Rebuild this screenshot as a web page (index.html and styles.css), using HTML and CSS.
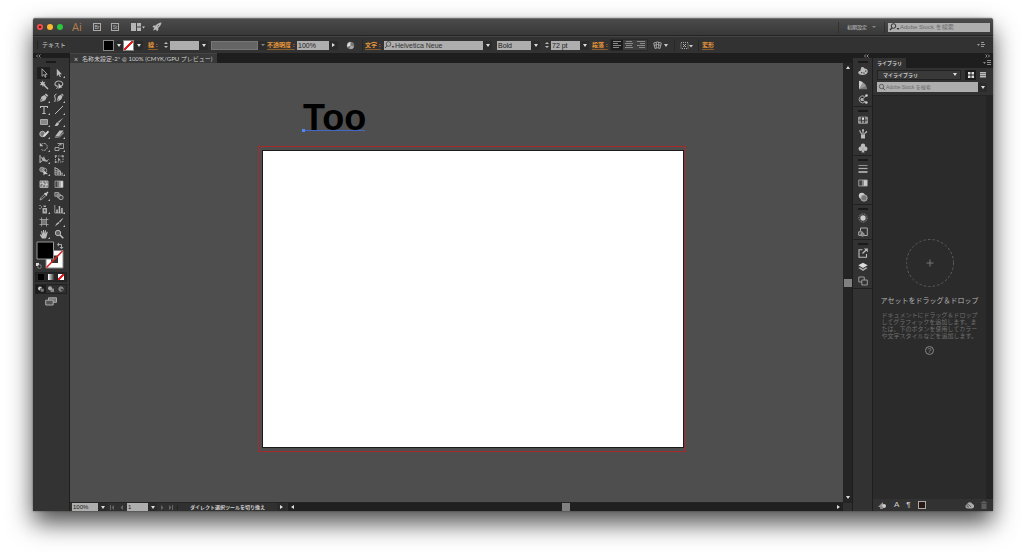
FILE: index.html
```html
<!DOCTYPE html>
<html lang="ja">
<head>
<meta charset="utf-8">
<title>名称未設定-2</title>
<link rel="stylesheet" href="styles.css">
</head>
<body>
<div class="window">
  <header class="titlebar">
    <div class="lights">
      <button class="light red" aria-label="閉じる"></button>
      <button class="light yellow" aria-label="最小化"></button>
      <button class="light green" aria-label="拡大"></button>
    </div>
    <span class="brand">Ai</span>
    <button class="app-box">Br</button>
    <button class="app-box">St</button>
    <button class="arrange" aria-label="ドキュメントレイアウト"><svg width="14" height="8" viewBox="0 0 14 8"><path d="M0 0h5v8H0zM6 0h4v3.5H6zM6 4.500h4V8H6z" fill="#b5b5b5"/><path d="M11 3.500h3l-1.500 2z" fill="#ccc"/></svg></button>
    <button class="rocket" aria-label="GPU パフォーマンス"><svg width="10" height="10" viewBox="0 0 10 10"><path d="M9.500.5C7 .6 5 1.800 3.800 3.400L1.500 3.600.3 5.300l2.100.1L1 8.500l3.200-1.100.7 2 1.400-1.300-.1-2.200C8 4.500 9.300 2.600 9.500.5z" fill="#b8b8b8"/><path d="M5.500 4.500l1.500-1.500" stroke="#555" stroke-width=".8"/></svg></button>
    <span class="spacer"></span>
    <button class="workspace">初期設定<i class="caret dim"></i></button>
    <label class="search stock"><svg width="11" height="8" viewBox="0 0 11 8"><circle cx="4.500" cy="3" r="2.300" fill="none" stroke="#333"/><path d="M3 4.800L1 7" stroke="#333" stroke-width="1.200"/><path d="M7.500 5h3L9 7z" fill="#333"/></svg><input type="text" placeholder="Adobe Stock を検索" aria-label="Adobe Stock を検索"></label>
  </header>

  <div class="control">
    <span class="object-kind">テキスト</span>
    <button class="swatch black" aria-label="塗り"></button><button class="drop" aria-label="塗りを選択"><i class="caret"></i></button>
    <button class="swatch none" aria-label="線なし"></button><button class="drop stroke-drop" aria-label="線を選択"><i class="caret"></i></button>
    <label class="link stroke-label" for="stroke">線 :</label>
    <span class="spin"><i></i><i></i></span>
    <input class="field w30" id="stroke" type="text"><button class="drop" aria-label="線幅を選択"><i class="caret"></i></button>
    <button class="profile" aria-label="線幅プロファイル"></button><button class="drop" aria-label="プロファイルを選択"><i class="caret dim"></i></button>
    <label class="link opacity-label" for="opacity">不透明度 :</label>
    <input class="field w32" id="opacity" type="text" value="100%"><button class="drop" aria-label="不透明度を選択"><i class="caret right"></i></button>
    <button class="tint" aria-label="オブジェクトを再配色"><svg width="9" height="9" viewBox="0 0 9 9"><circle cx="4.500" cy="4.500" r="3.700" fill="#777"/><path d="M4.500 1a3.500 3.500 0 0 0-3 5l3-1.500z" fill="#ddd"/><path d="M4.500 4.500L8 5.500A3.500 3.500 0 0 1 4 8z" fill="#aaa"/></svg></button>
    <label class="link font-label" for="font">文字 :</label>
    <span class="search font"><svg width="11" height="8" viewBox="0 0 11 8"><circle cx="4.500" cy="3" r="2.300" fill="none" stroke="#444" stroke-width=".8"/><path d="M3 4.800L1 7" stroke="#444"/><path d="M7.500 5h3L9 7z" fill="#444"/></svg><input id="font" type="text" value="Helvetica Neue"></span><button class="drop" aria-label="フォントを選択"><i class="caret"></i></button>
    <input class="field w34 weight" type="text" value="Bold" aria-label="スタイル"><button class="drop" aria-label="スタイルを選択"><i class="caret"></i></button>
    <span class="spin size-spin"><i></i><i></i></span>
    <input class="field w30" type="text" value="72 pt" aria-label="フォントサイズ"><button class="drop" aria-label="サイズを選択"><i class="caret"></i></button>
    <span class="link para-label">段落 :</span>
    <div class="align">
      <button class="on" aria-label="左揃え"><svg width="8" height="8" viewBox="0 0 8 8"><path d="M0 .5h8M0 2.500h5M0 4.500h8M0 6.500h6"/></svg></button>
      <button aria-label="中央揃え"><svg width="8" height="8" viewBox="0 0 8 8"><path d="M1 .5h6M0 2.500h8M1 4.500h6M0 6.500h8"/></svg></button>
      <button aria-label="右揃え"><svg width="8" height="8" viewBox="0 0 8 8"><path d="M0 .5h8M3 2.500h5M0 4.500h8M2 6.500h6"/></svg></button>
    </div>
    <button class="warp" aria-label="エンベロープ"><svg width="16" height="9" viewBox="0 0 16 9"><path d="M.7 2Q4.500-.2 8.300 2L7 7.500Q4.500 6 2 7.500zM.9 4.500Q4.500 2.500 8 4.500M3.300 1.200V6.800M5.700 1.200V6.800" fill="none" stroke="#aaa" stroke-width=".9"/><path d="M11 3h4l-2 3z" fill="#ccc"/></svg></button>
    <button class="similar" aria-label="類似オブジェクト"><svg width="13" height="9" viewBox="0 0 13 9"><path d="M1 1.500h7v6H1z" fill="none" stroke="#aaa" stroke-dasharray="1 1"/><path d="M3 3h1v1H3zM5 3h1v1H5zM4 4h1v1H4zM3 5h1v1H3zM5 5h1v1H5z" fill="#aaa"/><path d="M9 4h4l-2 2.500z" fill="#ccc"/></svg></button>
    <button class="link transform">変形</button>
    <span class="spacer"></span>
    <button class="menu" aria-label="メニュー"><svg width="8" height="6" viewBox="0 0 8 6"><path d="M0 2h3L1.500 4zM4 0h3v1H4zM4 2h4v1H4zM4 4h3v1H4z" fill="#999"/></svg></button>
  </div>

  <main class="work">
    <aside class="tools">
      <div class="strip"><svg width="5" height="4" viewBox="0 0 5 4"><path d="M2 .5L.5 2 2 3.500M4.500.5L3 2l1.500 1.500" fill="none" stroke="#aaa" stroke-width=".8"/></svg></div>
      <i class="grip wide"></i>
      <div class="tool-grid">
        <button class="on" aria-label="選択"><svg viewBox="0 0 10 10"><path d="M3 .8v7.500l1.900-1.700 1.200 2.700 1-.5-1.200-2.500h2.300z" fill="#222" stroke="#bbb" stroke-width=".8"/></svg></button>
        <button class="more" aria-label="ダイレクト選択"><svg viewBox="0 0 10 10"><path d="M2.800.8v7.500l1.900-1.700 1.200 2.700 1-.5-1.200-2.500h2.300z" fill="#bbb"/></svg></button>
        <button aria-label="自動選択"><svg viewBox="0 0 10 10"><path d="M4.500 4.500L9 9" stroke="#bbb" stroke-width="1.500"/><path d="M3.500.3l.7 2 2.200-.6-1.200 1.900 1.600 1.200-2.200.2L4 7.300 3.100 5 .7 5.300 2.100 3.500.8 1.700l2 .5z" fill="#bbb"/></svg></button>
        <button aria-label="なげなわ"><svg viewBox="0 0 10 10"><path d="M3 6.200C-.7 5 1 .9 5 1s5 4 2 5" fill="none" stroke="#aaa" stroke-width="1.200"/><path d="M3 5.500Q4.500 7 2.500 9" fill="none" stroke="#aaa"/><path d="M4.500 3v6l1.400-1.300 2.400-.2z" fill="#ccc"/></svg></button>
        <i class="rule"></i>
        <button class="more" aria-label="ペン"><svg viewBox="0 0 10 10"><path d="M7 .5l2.300 2.300-1.200 1L5.800 1.600zM5.500 2l2.300 2.300-1.600 3L1 9.200l2.500-3-.4-.5L.7 8.700 2.600 3.500z" fill="#bbb"/></svg></button>
        <button class="more" aria-label="曲線"><svg viewBox="0 0 10 10"><path d="M8 .5l1.700 1.700-.8.8-1.800-1.700zM6.800 1.800l1.700 1.800-1.300 2.900L3 9l2-2.700-.4-.4L2.600 8.500 4 3.300z" fill="#bbb"/><path d="M.7 9Q2 6 .8 4T2.500 1" fill="none" stroke="#bbb"/></svg></button>
        <button class="more" aria-label="文字"><svg viewBox="0 0 10 10"><path d="M1.500 3V1.500h7V3M5 1.500v7M3.300 8.500h3.400" fill="none" stroke="#bbb" stroke-width="1.100"/></svg></button>
        <button class="more" aria-label="直線"><svg viewBox="0 0 10 10"><path d="M1 9L9 1" stroke="#bbb"/></svg></button>
        <button class="more" aria-label="長方形"><svg viewBox="0 0 10 10"><path d="M1.500 2.500h7v5h-7z" fill="#888" stroke="#bbb" stroke-width=".8"/></svg></button>
        <button class="more" aria-label="ブラシ"><svg viewBox="0 0 10 10"><path d="M9.500.5L5 6 3.800 5z" fill="#bbb"/><path d="M3.500 5.300L5 6.700C4.500 9 2 9.500.5 8.700 2 8 1.800 5.500 3.500 5.300z" fill="#bbb"/></svg></button>
        <button class="more" aria-label="Shaper"><svg viewBox="0 0 10 10"><circle cx="3.500" cy="5" r="2.700" fill="#777" stroke="#bbb"/><path d="M9 1.500L4.500 6 4 8l2-.6L10 3z" fill="#ddd"/></svg></button>
        <button class="more" aria-label="消しゴム"><svg viewBox="0 0 10 10"><path d="M5.500 1.500h4L5 7.500H1z" fill="#bbb"/><path d="M1 7.500h4L4.500 9H.7z" fill="#777"/><path d="M5.500 7.500l4-5v2L5 9z" fill="#999"/></svg></button>
        <i class="rule"></i>
        <button class="more" aria-label="回転"><svg viewBox="0 0 10 10"><path d="M2.500 2.200A3.500 3.500 0 1 1 2 7" fill="none" stroke="#aaa" stroke-dasharray="2 .7"/><path d="M.8.8v3.500h3.500z" fill="#bbb"/></svg></button>
        <button class="more" aria-label="拡大・縮小"><svg viewBox="0 0 10 10"><path d="M1 5.500h4v3H1zM3.500 1.500h6v5H6M4 4l3-2M5.500 2H7v1.500" fill="none" stroke="#aaa" stroke-width=".9"/></svg></button>
        <button class="more" aria-label="線幅"><svg viewBox="0 0 10 10"><path d="M1 1v8M1 8C4 8 3 4 5 5s2 3 4.500.5" fill="none" stroke="#bbb"/><path d="M1 2l3 2 1-2 1 3 3 3-5-1z" fill="#aaa"/></svg></button>
        <button aria-label="自由変形"><svg viewBox="0 0 10 10"><path d="M1.500 2h7.500v6H1.500z" fill="none" stroke="#aaa" stroke-width=".9" stroke-dasharray="1.500 1"/><path d="M.8 1.200h1.700v1.700H.8zM.8 7.200h1.700v1.700H.8zM8 1.200h1.700v1.700H8zM4 3.500v4l1-1 2-.3z" fill="#aaa"/></svg></button>
        <button class="more" aria-label="シェイプ形成"><svg viewBox="0 0 10 10"><circle cx="3" cy="3.500" r="2.300" fill="#777" stroke="#aaa" stroke-width=".8"/><circle cx="5.500" cy="4.500" r="2.300" fill="none" stroke="#aaa" stroke-width=".8"/><path d="M4.500 4v5.500L6 8l3 .2z" fill="#ccc"/></svg></button>
        <button class="more" aria-label="遠近グリッド"><svg viewBox="0 0 10 10"><path d="M1 1v8h8M1 2l3 1v6M4 3.500L6.500 5v4M1 4.500l6 1.500M1 6.800l8 .5" fill="none" stroke="#aaa"/></svg></button>
        <i class="rule"></i>
        <button aria-label="メッシュ"><svg viewBox="0 0 10 10"><path d="M1 2h8v6.500H1z" fill="#777" stroke="#aaa"/><path d="M1 5q2-2 4 0t4 0M3 2q3 3 0 6M6.500 2q2 3 0 6" fill="none" stroke="#ddd" stroke-width=".8"/></svg></button>
        <button aria-label="グラデーション"><svg viewBox="0 0 10 10"><path d="M1 2h2v6.500H1z" fill="#444"/><path d="M3 2h2v6.500H3z" fill="#777"/><path d="M5 2h2v6.500H5z" fill="#aaa"/><path d="M7 2h2v6.500H7z" fill="#ddd"/><path d="M1 2h8v6.500H1z" fill="none" stroke="#aaa" stroke-width=".7"/></svg></button>
        <button class="more" aria-label="スポイト"><svg viewBox="0 0 10 10"><path d="M1 9l1-2.300L5.500 3.200l1.300 1.300L3.300 8z" fill="none" stroke="#aaa" stroke-width=".9"/><path d="M5 2.500l1-.8 1 .3L8.500.5l1 1L8 3l.3 1-.8 1z" fill="#ccc"/></svg></button>
        <button aria-label="ブレンド"><svg viewBox="0 0 10 10"><path d="M.8 1.500h4v3.800h-4z" fill="#666" stroke="#aaa" stroke-width=".8"/><circle cx="5" cy="5" r="2" fill="#777" stroke="#aaa" stroke-width=".8"/><circle cx="7" cy="6.500" r="2.200" fill="#444" stroke="#bbb" stroke-width=".8"/></svg></button>
        <i class="rule"></i>
        <button class="more" aria-label="シンボルスプレー"><svg viewBox="0 0 10 10"><path d="M3.500 4h4.500v5.500H3.500zM4.500 1.500h2.500V3H4.500z" fill="#aaa"/><path d="M.5 1h1v1h-1zM2 2.500h1v1H2zM.5 4h1v1h-1z" fill="#ccc"/><path d="M5 5.500h1.500v2H5z" fill="#444"/></svg></button>
        <button class="more" aria-label="棒グラフ"><svg viewBox="0 0 10 10"><path d="M.8 1v8h8.700" fill="none" stroke="#aaa" stroke-width=".8"/><path d="M2.300 5.500h1.500V9H2.300zM4.700 2h1.500v7H4.700zM7.200 4h1.500v5H7.200z" fill="#bbb"/></svg></button>
        <i class="rule"></i>
        <button aria-label="アートボード"><svg viewBox="0 0 10 10"><path d="M2.500.5v9M7.500.5v9M.5 2.500h9M.5 7.500h9" stroke="#aaa" stroke-width=".8"/><path d="M3 3h4v4H3z" fill="#777"/></svg></button>
        <button class="more" aria-label="スライス"><svg viewBox="0 0 10 10"><path d="M9.500 1L6 5.500 5 4.500 7.500 2zM4.500 5l1 1L1 9.500 2.500 6.500z" fill="#bbb"/></svg></button>
        <button class="more" aria-label="手のひら"><svg viewBox="0 0 10 10"><path d="M3 9.500L.7 5.800l1-.5L3 6.500 2 2.200l1-.3 1 3V1h1v3.700L6 1.200l1 .2-.4 3.700 1.200-2.500.9.300-1.200 5L6.500 9.500z" fill="#bbb"/></svg></button>
        <button aria-label="ズーム"><svg viewBox="0 0 10 10"><circle cx="4" cy="4" r="2.700" fill="#666" stroke="#bbb"/><path d="M6 6l3.300 3.300" stroke="#bbb" stroke-width="1.600"/></svg></button>
      </div>
      <svg class="fillstroke" width="30" height="29" viewBox="0 0 30 29">
        <path d="M10 9.500h17V27H10z" fill="#fff" stroke="#888"/><path d="M15 14.500h7v7.500h-7z" fill="#333"/><path d="M10.500 26.500L26.500 10" stroke="#e02020" stroke-width="1.500"/>
        <path d="M1 1h16.500v17H1z" fill="#000" stroke="#999"/>
        <path d="M22.500 3.500h3v3" fill="none" stroke="#aaa"/><path d="M23 1.500v4l-2-2zM23.500 6h4l-2 2.200z" fill="#aaa"/>
        <path d="M0 22h3v3H0z" fill="#ddd"/><path d="M2 24h3v3H2z" fill="#111" stroke="#aaa" stroke-width=".7"/>
      </svg>
      <div class="triple">
        <button aria-label="カラー"><i class="chip solid"></i></button><button aria-label="グラデーション塗り"><i class="chip grad"></i></button><button aria-label="なし"><i class="chip empty"></i></button>
      </div>
      <div class="triple modes">
        <button class="on" aria-label="標準描画"><svg viewBox="0 0 8 8"><circle cx="3" cy="3.500" r="2" fill="#ccc"/><path d="M3.500 3.500H7V7H3.500z" fill="#777" stroke="#222" stroke-width=".5"/></svg></button>
        <button aria-label="背面描画"><svg viewBox="0 0 8 8"><path d="M3.500 3.500H7V7H3.500z" fill="#888"/><circle cx="3" cy="3.200" r="2" fill="#aaa"/></svg></button>
        <button aria-label="内側描画"><svg viewBox="0 0 8 8"><circle cx="4" cy="4" r="2.200" fill="#777" stroke="#999" stroke-width=".8"/><path d="M4 4h2v1.500H4z" fill="#333"/></svg></button>
      </div>
      <button class="screen" aria-label="スクリーンモード"><svg width="12" height="9" viewBox="0 0 12 9"><path d="M3.500.8h8v4.500h-8z" fill="#777" stroke="#aaa"/><path d="M.7 3.200h7.500V8H.7z" fill="#555" stroke="#aaa"/></svg></button>
    </aside>

    <section class="document">
      <div class="tabs"><div class="tab"><button class="close" aria-label="タブを閉じる">×</button>名称未設定-2* @ 100% (CMYK/GPU プレビュー)</div></div>
      <div class="view">
        <div class="canvas">
          <div class="bleed"></div>
          <div class="artboard"></div>
          <div class="type">Too</div>
        </div>
        <div class="vscroll"><i class="tri up"></i><i class="thumb"></i><i class="tri down"></i></div>
      </div>
      <footer class="status">
        <input class="field zoom" type="text" value="100%" aria-label="ズーム率"><button class="drop" aria-label="ズーム率を選択"><i class="caret"></i></button>
        <button class="nav" aria-label="前へ"><svg width="14" height="5" viewBox="0 0 14 5"><path d="M0 0h1v5H0zM4 0v5L1.500 2.500zM13 0v5l-2.500-2.500z" fill="#666"/></svg></button>
        <input class="field page" type="text" value="1" aria-label="アートボード番号"><button class="drop" aria-label="アートボードを選択"><i class="caret"></i></button>
        <button class="nav next" aria-label="次へ"><svg width="14" height="5" viewBox="0 0 14 5"><path d="M1 0v5l2.500-2.500zM9 0v5l2.500-2.500zM12 0h1v5h-1z" fill="#666"/></svg></button>
        <span class="message">ダイレクト選択ツールを切り換え</span>
        <button class="drop" aria-label="表示を選択"><i class="caret right"></i></button>
        <div class="hscroll"><i class="tri left"></i><i class="thumb"></i><i class="tri right"></i></div>
        <i class="corner"></i>
      </footer>
    </section>

    <nav class="dock">
      <div class="strip end"><svg width="5" height="4" viewBox="0 0 5 4"><path d="M2 .5L.5 2 2 3.500M4.500.5L3 2l1.500 1.500" fill="none" stroke="#aaa" stroke-width=".8"/></svg></div>
      <div class="dock-group"><i class="grip"></i>
        <button aria-label="カラー"><svg viewBox="0 0 10 10"><path d="M4.500 1C6 1 6 2.500 7.500 2.800S10 4 9.700 6 7 9 4.500 9 .2 8 .2 6.500 2 5.500 2.500 4.500 2.500 1 4.500 1z" fill="#bbb"/><path d="M3 6h1.300v1.200H3zM5.300 6.500h1.300v1.200H5.300zM7 4.500h1.300v1.200H7z" fill="#444"/></svg></button>
        <button aria-label="カラーガイド"><svg viewBox="0 0 10 10"><path d="M1 .8Q8 2 9.300 9.200H1z" fill="#777"/><path d="M1 .8Q3.500 1.300 5 2.800L1 9.200z" fill="#ccc"/><path d="M1 9.200L5 2.800Q7 4 8 6z" fill="#999"/></svg></button>
        <button aria-label="カラーテーマ"><svg viewBox="0 0 10 10"><path d="M6.500 2.400A3.500 3.500 0 1 0 7 8" fill="none" stroke="#aaa"/><circle cx="4" cy="5.500" r="1.500" fill="#bbb"/><path d="M4 5.500L8.500 1.500M4 5.500l4.500 3.300" stroke="#aaa"/><circle cx="8.500" cy="1.500" r="1.300" fill="#ccc"/><circle cx="8.300" cy="8.500" r="1.300" fill="#ccc"/></svg></button>
      </div>
      <div class="dock-group"><i class="grip"></i>
        <button aria-label="スウォッチ"><svg viewBox="0 0 10 10"><path d="M.7 2.200h8.600v6H.7z" fill="#888" stroke="#aaa"/><path d="M.7 5.200h8.600M3.500 2v6M6.500 2v6" stroke="#333" stroke-width=".8"/><path d="M4 3h2v1.700H4z" fill="#ddd"/></svg></button>
        <button aria-label="ブラシ"><svg viewBox="0 0 10 10"><path d="M3 5.500h4v4H3z" fill="#bbb"/><path d="M4 5.500L2 2.500M5 5.500V1M6 5.500L8 3" stroke="#bbb" stroke-width="1.100"/><path d="M.8 1l2 .7-.5 1.800zM4.200.2h1.700v2H4.200zM7.200 3l1.600-1.200.4 1.600L8 4z" fill="#bbb"/></svg></button>
        <button aria-label="シンボル"><svg viewBox="0 0 10 10"><circle cx="5" cy="2.800" r="2.200" fill="#bbb"/><circle cx="2.700" cy="5.800" r="2.200" fill="#bbb"/><circle cx="7.300" cy="5.800" r="2.200" fill="#bbb"/><path d="M5 4l1.500 5.500h-3z" fill="#bbb"/></svg></button>
      </div>
      <div class="dock-group"><i class="grip"></i>
        <button aria-label="線"><svg viewBox="0 0 10 10"><path d="M.5 1.500h9" stroke="#aaa" stroke-width=".8"/><path d="M.5 4.500h9" stroke="#aaa" stroke-width="1.200"/><path d="M.5 8h9" stroke="#bbb" stroke-width="1.600"/></svg></button>
        <button aria-label="グラデーション"><svg viewBox="0 0 10 10"><path d="M1 2h3v6H1z" fill="#444"/><path d="M4 2h2v6H4z" fill="#888"/><path d="M6 2h3v6H6z" fill="#ccc"/><path d="M.7 2h8.600v6H.7z" fill="none" stroke="#aaa" stroke-width=".8"/></svg></button>
        <button aria-label="透明"><svg viewBox="0 0 10 10"><circle cx="3.800" cy="3.800" r="3" fill="#ccc"/><circle cx="6" cy="6" r="3.200" fill="#777" stroke="#bbb" stroke-width=".8"/></svg></button>
      </div>
      <div class="dock-group"><i class="grip"></i>
        <button aria-label="アピアランス"><svg viewBox="0 0 10 10"><circle cx="5" cy="5" r="2.700" fill="#ccc"/><circle cx="5" cy="5" r="4.100" fill="none" stroke="#999" stroke-dasharray="1 .8"/></svg></button>
        <button aria-label="グラフィックスタイル"><svg viewBox="0 0 10 10"><path d="M2.500 4V1h6.800v7.500H6" fill="none" stroke="#aaa"/><path d="M.7 4.800h3.500v3.500H.7z" fill="#444" stroke="#aaa"/><circle cx="4.500" cy="7.500" r="1.700" fill="#888" stroke="#aaa" stroke-width=".7"/></svg></button>
      </div>
      <div class="dock-group"><i class="grip"></i>
        <button aria-label="書き出し"><svg viewBox="0 0 10 10"><path d="M4.500 1.700H1v7.500h7.500V6" fill="none" stroke="#bbb" stroke-width="1.100"/><path d="M4.500 5.500L8.500 1.500" stroke="#bbb" stroke-width="1.200"/><path d="M6 .5h3.800v3.800z" fill="#bbb"/></svg></button>
        <button aria-label="レイヤー"><svg viewBox="0 0 10 10"><path d="M5 .7l4.700 2.600L5 6 .3 3.300z" fill="#ddd"/><path d="M.3 6L2 5.200l3 1.700 3-1.700 1.700.8L5 9z" fill="#aaa"/></svg></button>
        <button aria-label="アートボード"><svg viewBox="0 0 10 10"><path d="M.8 1h5.500v5H.8z" fill="none" stroke="#999"/><path d="M3.800 4h5.500v5H3.800z" fill="#333" stroke="#999"/></svg></button>
      </div>
    </nav>

    <aside class="library">
      <div class="strip end"><svg width="5" height="4" viewBox="0 0 5 4"><path d="M.5.5L2 2 .5 3.500M3 .5L4.500 2 3 3.500" fill="none" stroke="#aaa" stroke-width=".8"/></svg></div>
      <div class="lib-tabs"><span class="lib-tab">ライブラリ</span><span class="spacer"></span><button class="menu" aria-label="パネルメニュー"><svg width="8" height="6" viewBox="0 0 8 6"><path d="M0 2h3L1.500 4zM4 0h4v1H4zM4 2h4v1H4zM4 4h4v1H4z" fill="#888"/></svg></button></div>
      <div class="lib-row">
        <span class="select"><select aria-label="ライブラリ"><option>マイライブラリ</option></select><i class="caret"></i></span>
        <button class="view-btn on" aria-label="グリッド表示"><svg width="6" height="6" viewBox="0 0 6 6"><path d="M0 0h2.500v2.500H0zM3.500 0H6v2.500H3.500zM0 3.500h2.500V6H0zM3.500 3.500H6V6H3.500z" fill="#ddd"/></svg></button>
        <button class="view-btn" aria-label="リスト表示"><svg width="6" height="6" viewBox="0 0 6 6"><path d="M0 0h6v6H0z" fill="#777"/><path d="M0 .5h6M0 2.500h6M0 4.500h6" stroke="#bbb"/></svg></button>
      </div>
      <div class="lib-row second">
        <label class="search lib-search"><svg width="9" height="8" viewBox="0 0 9 8"><circle cx="4.500" cy="3.500" r="2.200" fill="none" stroke="#555" stroke-width=".9"/><path d="M6 5l2 2.200" stroke="#555"/></svg><input type="text" placeholder="Adobe Stock を検索" aria-label="Adobe Stock を検索"></label><button class="drop" aria-label="検索対象を選択"><i class="caret"></i></button>
      </div>
      <div class="lib-body">
        <div class="empty-state">
          <svg width="50" height="50" viewBox="0 0 50 50"><circle cx="25" cy="25" r="23.500" fill="none" stroke="#5c5c5c" stroke-dasharray="2.500 2"/><path d="M21.500 25h7M25 21.500v7" stroke="#777"/></svg>
          <h2>アセットをドラッグ＆ドロップ</h2>
          <p>ドキュメントにドラッグ＆ドロップ<br>してグラフィックを追加します。ま<br>たは、下のボタンを使用してカラー<br>や文字スタイルなどを追加します。</p>
          <button class="help" aria-label="ヘルプ">?</button>
        </div>
        <i class="lib-scroll"></i>
      </div>
      <footer class="lib-foot">
        <button aria-label="グラフィックを追加"><svg width="9" height="8" viewBox="0 0 9 8"><path d="M0 6L5 1v5z" fill="#999"/><circle cx="6" cy="5" r="2" fill="#ccc"/><path d="M2 5.500h3V8H2z" fill="#888"/></svg></button>
        <button class="letter">A</button>
        <button class="letter">¶</button>
        <button aria-label="塗りのカラーを追加"><i class="color-chip"></i></button>
        <span class="spacer"></span>
        <button aria-label="Creative Cloud"><svg width="9" height="7" viewBox="0 0 9 7"><path d="M2.500 6.500A2.200 2.200 0 0 1 2 2.200 3 3 0 0 1 7.500 2a2.300 2.300 0 0 1-.5 4.500z" fill="#aaa"/><path d="M4 4.700a1.200 1.200 0 1 1 .2-1.500L6 5" fill="none" stroke="#444" stroke-width=".8"/></svg></button>
        <button aria-label="削除"><svg width="6" height="8" viewBox="0 0 6 8"><path d="M0 1h6v1H0zM2 0h2v1H2zM.5 2.500h5V8h-5z" fill="#5c5c5c"/></svg></button>
      </footer>
    </aside>
  </main>
</div>
</body>
</html>
```
FILE: styles.css
```css
* { box-sizing: border-box; }
body {
  margin: 0;
  height: 100vh;
  padding: 18px 33px 45px;
  background: #fff;
  color: #cfcfcf;
  font: 6px/8px "Liberation Sans", "Noto Sans CJK JP", sans-serif;
  overflow: hidden;
}
button, input, select { margin: 0; padding: 0; border: 0; font: inherit; color: inherit; background: none; min-width: 0; outline: 0; }
button { display: flex; align-items: center; justify-content: center; flex: none; }
svg { display: block; flex: none; }
i { display: block; flex: none; }
.spacer { flex: 1; }

.window {
  height: 100%;
  display: flex;
  flex-direction: column;
  border-radius: 3px 3px 0 0;
  background: #323232;
  box-shadow: 0 12px 24px rgba(0, 0, 0, .7), 0 0 2px rgba(0, 0, 0, .5);
}
.titlebar {
  height: 18px;
  flex: none;
  display: flex;
  align-items: center;
  padding: 0 3px 0 4px;
  border-top: 1px solid #707070;
  border-bottom: 1px solid #242424;
  border-radius: 3px 3px 0 0;
  background: linear-gradient(#4b4b4b, #383838);
}
.lights { display: flex; gap: 4px; margin-right: 9px; }
.light { width: 6px; height: 6px; border-radius: 50%; }
.red { background: radial-gradient(#7a1010 15%, #f4504b 40%); }
.yellow { background: #fcb92d; }
.green { background: #29c63f; }
.brand { width: 21px; color: #b97d4e; font: 11px/12px "Open Sans", sans-serif; }
.app-box { width: 8px; height: 8px; border: 1px solid #aaa; margin-right: 10px; font-size: 5px; line-height: 6px; color: #bbb; }
.arrange { margin-left: 2px; margin-right: 7px; }
.workspace { height: 11px; padding: 0 8px; gap: 5px; margin-right: 3px; border: solid #303030; border-width: 0 1px; font-size: 5px; }
.search { display: flex; align-items: center; height: 9px; background: #aeaeae; color: #333; overflow: hidden; }
.search input { flex: 1; height: 9px; }
.search input::placeholder { color: #6c6c6c; opacity: 1; }
.stock { width: 102px; padding-left: 1px; }

.caret { width: 0; height: 0; border: solid transparent; border-width: 3px 2px 0; border-top-color: #ddd; }
.caret.right { border-color: transparent; border-width: 2px 0 2px 3px; border-left-color: #ddd; }
.caret.dim { border-width: 2px 2px 0; border-top-color: #888; }
.drop { width: 9px; height: 9px; background: #2b2b2b; }

.control {
  height: 17px;
  flex: none;
  display: flex;
  align-items: center;
  padding: 0 8px 0 4px;
  border-top: 1px solid #444;
  background: #323232;
  white-space: nowrap;
}
.object-kind { width: 66px; padding-left: 4px; border-left: 1px solid #222; }
.swatch { width: 11px; height: 11px; border: 1px solid #888; }
.swatch.black { background: #000; }
.swatch.none { background: linear-gradient(135deg, #fff 43%, #e02020 43% 57%, #fff 57%); }
.stroke-drop { margin-right: 5px; }
.link { color: #e8973a; text-decoration: underline #8a5c2a 1px; text-underline-offset: 2px; font-weight: bold; }
.stroke-label { width: 14px; }
.spin { display: flex; flex-direction: column; gap: 2px; width: 8px; align-items: center; }
.spin i { border: solid transparent; border-width: 0 2px 2px; border-bottom-color: #bbb; }
.spin i + i { transform: rotate(180deg); }
.field { height: 9px; padding-left: 1px; background: #aeaeae; color: #222; font-size: 7px; line-height: 9px; }
.w30 { width: 29px; }
.w32 { width: 32px; }
.w34 { width: 34px; }
.profile { width: 47px; height: 9px; margin-left: 3px; background: #656565; border: 1px solid #777; }
.opacity-label { width: 30px; }
.tint { width: 25px; height: 13px; margin-right: 2px; border-right: 1px solid #282828; }
.font-label { width: 19px; }
.search.font { width: 99px; font-size: 7px; }
.weight { margin-left: 5px; }
.size-spin { margin-left: 3px; }
.para-label { width: 21px; padding-left: 3px; }
.align { display: flex; border: 1px solid #282828; }
.align button { width: 12px; height: 10px; background: #3d3d3d; }
.align .on { background: #1c1c1c; }
.align path { stroke: #888; fill: none; }
.warp { width: 27px; height: 13px; border-right: 1px solid #282828; }
.similar { width: 24px; height: 13px; margin-right: 3px; border-right: 1px solid #282828; }

.work { flex: 1; min-height: 0; display: flex; background: #1e1e1e; }
.strip { height: 5px; flex: none; display: flex; align-items: center; padding: 0 3px; background: #1e1e1e; }
.strip.end { justify-content: flex-end; }
.grip { width: 10px; height: 2px; background: #1a1a1a; }
.tools { width: 36px; flex: none; margin-right: 1px; display: flex; flex-direction: column; align-items: center; background: #333; }
.tools .strip { width: 100%; }
.grip.wide { margin: 3px 0 4px; }
.tool-grid { display: grid; grid-template-columns: 13px 13px; column-gap: 2px; }
.tool-grid button { position: relative; height: 12px; }
.tool-grid svg { width: 10px; height: 10px; }
.tool-grid .on { background: #1f1f1f; }
.tool-grid .more::after { content: ""; position: absolute; right: 0; bottom: 1px; border: solid transparent; border-width: 0 0 2px 2px; border-bottom-color: #bbb; }
.rule { grid-column: 1 / -1; height: 1px; }
.fillstroke { margin: 1px 0; }
.triple { display: flex; margin-top: 1px; background: #262626; border: 1px solid #222; }
.triple button { width: 10px; height: 8px; }
.triple svg { width: 8px; height: 8px; }
.triple .on { background: #1c1c1c; }
.chip { width: 6px; height: 6px; }
.solid { background: #000; }
.grad { background: linear-gradient(90deg, #fff, #333); }
.empty { background: linear-gradient(135deg, #fff 35%, #e02020 35% 65%, #fff 65%); }
.modes { margin-top: 2px; }
.modes button { background: #303030; }
.screen { margin-top: 3px; }

.document { flex: 1; min-width: 0; display: flex; flex-direction: column; }
.tabs { height: 10px; flex: none; display: flex; background: #1e1e1e; }
.tab { display: flex; align-items: center; gap: 4px; padding: 0 5px 0 4px; border-top: 1px solid #444; background: #383838; font-family: Lato, "Noto Sans CJK JP", sans-serif; white-space: nowrap; }
.close { font-size: 7px; }
.view { flex: 1; min-height: 0; display: flex; }
.canvas { flex: 1; position: relative; overflow: hidden; background: #4e4e4e; }
.bleed, .artboard, .type { position: absolute; }
.bleed { left: 188px; top: 83px; width: 428px; height: 306px; border: 1px solid #a82a2c; }
.artboard { left: 192px; top: 87px; width: 422px; height: 298px; border: 1px solid #1a1a1a; background: #fff; }
.type { left: 233px; top: 35px; width: 62px; height: 33px; border-bottom: 1px solid #4468c8; color: #000; font: bold 36px/40px "Liberation Sans", sans-serif; }
.type::before { content: ""; position: absolute; left: -1px; bottom: -2px; width: 3px; height: 3px; background: #5588ee; }
.vscroll { width: 9px; display: flex; flex-direction: column; justify-content: space-between; align-items: center; padding: 3px 0; background: #242424; }
.thumb { width: 8px; height: 8px; background: #808080; }
.tri { border: 2px solid transparent; }
.tri.up { border-width: 0 2px 3px; border-bottom-color: #ddd; }
.tri.down { border-width: 3px 2px 0; border-top-color: #ddd; }
.tri.left { border-width: 2px 3px 2px 0; border-right-color: #ddd; }
.tri.right { border-width: 2px 0 2px 3px; border-left-color: #ddd; }
.status { height: 9px; flex: none; display: flex; align-items: center; padding-left: 2px; background: #303030; border-top: 1px solid #242424; }
.status .field, .status .drop { height: 8px; line-height: 8px; }
.zoom { width: 26px; font-size: 6px; }
.page { width: 21px; font-size: 6px; }
.nav { width: 20px; }
.nav.next { width: 21px; border-right: 1px solid #222; }
.message { width: 99px; font-size: 5px; font-weight: bold; text-align: center; white-space: nowrap; }
.hscroll { flex: 1; height: 8px; margin-left: 2px; display: flex; justify-content: space-between; align-items: center; padding: 0 3px; background: #202020; }
.corner { width: 9px; height: 8px; background: #303030; }

.dock { width: 19px; flex: none; margin: 0 1px; background: #323232; }
.dock-group { display: flex; flex-direction: column; align-items: center; padding-top: 3px; border-bottom: 1px solid #202020; }
.dock-group .grip { margin-bottom: 1px; }
.dock-group button { width: 14px; height: 14px; }
.dock-group svg { width: 10px; height: 10px; }

.library { width: 120px; flex: none; display: flex; flex-direction: column; background: #323232; font-size: 5px; }
.lib-tabs { height: 10px; display: flex; align-items: center; padding-right: 2px; background: #1e1e1e; }
.lib-tab { align-self: stretch; padding: 1px 4px 0; background: #323232; font-weight: bold; }
.lib-row { display: flex; align-items: center; height: 13px; padding: 0 4px; }
.lib-row.second { height: 15px; padding-bottom: 2px; border-bottom: 1px solid #242424; }
.select { display: flex; align-items: center; width: 84px; height: 10px; padding: 0 3px 0 5px; border: 1px solid #222; background: #393939; font-weight: bold; }
.select select { flex: 1; appearance: none; height: 8px; line-height: 8px; }
.view-btn { width: 11px; height: 10px; margin-left: 4px; }
.view-btn + .view-btn { margin-left: 1px; }
.view-btn.on { background: #1c1c1c; }
.lib-search { width: 101px; height: 10px; }
.lib-body { flex: 1; display: flex; background: #2b2b2b; }
.empty-state { flex: 1; display: flex; flex-direction: column; align-items: center; justify-content: center; padding-bottom: 2px; white-space: nowrap; }
.empty-state h2 { margin: 8px 0 6px; font-size: 7px; line-height: 10px; font-weight: normal; color: #b4b4b4; }
.empty-state p { margin: 0; font-size: 6px; line-height: 7px; color: #6f6f6f; }
.help { width: 9px; height: 9px; margin-top: 6px; border: 1px solid #888; border-radius: 50%; font-size: 7px; line-height: 7px; color: #999; }
.lib-scroll { width: 7px; background: #242424; }
.lib-foot { height: 12px; flex: none; display: flex; align-items: center; gap: 7px; padding: 0 6px 0 5px; background: #323232; }
.letter { font-size: 8px; }
.color-chip { width: 8px; height: 8px; border: 1px solid #aaa; background: #2a1814; }
```
